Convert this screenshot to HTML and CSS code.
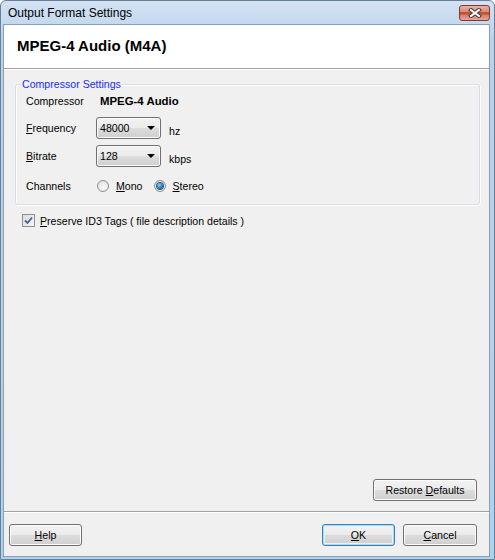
FILE: index.html
```
<!DOCTYPE html>
<html lang="en">
<head>
    <title>Output Format Settings</title>
    <link rel="stylesheet" href="styles.css">
</head>
<body>

    <div class="window">
        <div class="titlebar">
            <span class="title">Output Format Settings</span>
            <div class="close-btn">
                <svg width="14" height="10" viewBox="0 0 14 10">
                    <path d="M3 2 L11 8 M11 2 L3 8" stroke="#3b3b3b" stroke-width="4" stroke-linecap="square"/>
                    <path d="M3 2 L11 8 M11 2 L3 8" stroke="#ffffff" stroke-width="2" stroke-linecap="square"/>
                </svg>
            </div>
        </div>

        <div class="client">
            <div class="header">MPEG-4 Audio (M4A)</div>

            <div class="content">
                <fieldset class="group">
                    <legend>Compressor Settings</legend>

                    <div class="row row-first">
                        <span class="label">Compressor</span>
                        <span class="value">MPEG-4 Audio</span>
                    </div>
                    <div class="row row-combo">
                        <span class="label"><u>F</u>requency</span>
                        <div class="combo"><span>48000</span><span class="arrow"></span></div>
                        <span class="unit">hz</span>
                    </div>
                    <div class="row row-combo">
                        <span class="label"><u>B</u>itrate</span>
                        <div class="combo"><span>128</span><span class="arrow"></span></div>
                        <span class="unit">kbps</span>
                    </div>
                    <div class="row row-channels">
                        <span class="label">Channels</span>
                        <div class="radio"><span class="radio-circle"></span><span><u>M</u>ono</span></div>
                        <div class="radio"><span class="radio-circle checked"></span><span><u>S</u>tereo</span></div>
                    </div>
                </fieldset>

                <div class="check-row">
                    <span class="checkbox">
                        <svg width="11" height="11" viewBox="0 0 11 11">
                            <path d="M2 5.5 L4.5 8 L9 2.5" fill="none" stroke="#4a5f97" stroke-width="1.8"/>
                        </svg>
                    </span>
                    <span><u>P</u>reserve ID3 Tags ( file description details )</span>
                </div>

                <div class="restore-row">
                    <div class="btn btn-restore"><span>Restore <u>D</u>efaults</span></div>
                </div>
            </div>

            <div class="footer">
                <div class="btn btn-help"><span><u>H</u>elp</span></div>
                <div class="footer-right">
                    <div class="btn btn-ok"><span><u>O</u>K</span></div>
                    <div class="btn btn-cancel"><span><u>C</u>ancel</span></div>
                </div>
            </div>
        </div>
    </div>

</body>
</html>
```

FILE: styles.css
```
body {
    margin: 0;
    padding: 0;
    font-family: "Liberation Sans", Arial, sans-serif;
    font-size: 10.6px;
    color: #000;
    background-color: #fff;
}
.window {
    width: 495px;
    height: 560px;
    box-sizing: border-box;
    border: 1px solid #6b7f96;
    border-radius: 6px 6px 0 0;
    padding: 0 4px 2px 2px;
    background: linear-gradient(#d3e2f3, #bad2ea 40px, #b4d0ec 80%, #a9d3f0);
    display: flex;
    flex-direction: column;
}
.titlebar {
    height: 23px;
    display: flex;
    justify-content: space-between;
    align-items: flex-start;
}
.title {
    padding-left: 5px;
    line-height: 24px;
    font-size: 12px;
}
.close-btn {
    margin-top: 4px;
    width: 31px;
    height: 16px;
    box-sizing: border-box;
    border: 1px solid #7e3a33;
    border-radius: 3px;
    background: linear-gradient(#eab0a4, #dc8a7c 40%, #c5532f 42%, #c5532f 60%, #d77a6a 62%, #e7a597);
    display: flex;
    justify-content: center;
    align-items: center;
}
.client {
    flex: 1;
    display: flex;
    flex-direction: column;
    background-color: #f0f0f0;
    border: 1px solid #8c9db2;
}
.header {
    background-color: #fff;
    border-bottom: 1px solid #a0a0a0;
    box-shadow: 0 1px 0 #fff;
    display: flex;
    align-items: center;
    padding: 0 0 2px 13px;
    height: 41px;
    font-size: 15px;
    font-weight: bold;
}
.content {
    flex: 1;
    display: flex;
    flex-direction: column;
    padding: 9px 12px 10px 0;
}
.group {
    margin: 0 -3px 0 11px;
    padding: 0 0 8px 0;
    border: 1px solid #d5dfe5;
    border-radius: 3px;
    box-shadow: inset 1px 1px 0 #fff, 1px 1px 0 #fff;
}
.group legend {
    margin-left: 5px;
    padding: 0 1px;
    line-height: 13px;
    color: #1a2ef0;
    background-color: #f0f0f0;
}
.row {
    display: flex;
    align-items: center;
    padding-left: 10px;
}
.row-first {
    height: 20px;
}
.row-combo {
    height: 22px;
    margin-top: 6px;
}
.row-channels {
    height: 20px;
    margin-top: 9px;
}
.label {
    width: 70px;
}
.value {
    padding-left: 4px;
    font-size: 11.4px;
    font-weight: bold;
}
.combo {
    width: 65px;
    height: 22px;
    box-sizing: border-box;
    border: 1px solid #707070;
    border-radius: 3px;
    background: linear-gradient(#f2f2f2, #ebebeb 50%, #dddddd 50%, #cfcfcf);
    box-shadow: inset 0 0 0 1px #fafafa;
    padding-left: 3px;
    line-height: 20px;
    display: flex;
    justify-content: space-between;
    align-items: center;
}
.arrow {
    width: 0;
    height: 0;
    margin-right: 5px;
    border-left: 4px solid transparent;
    border-right: 4px solid transparent;
    border-top: 4px solid #000;
}
.unit {
    margin-left: 8px;
    padding-top: 6px;
}
.radio {
    display: flex;
    align-items: center;
    margin-left: 1px;
    margin-right: 10px;
}
.radio-circle {
    width: 12px;
    height: 12px;
    box-sizing: border-box;
    border: 1px solid #8e8f8f;
    border-radius: 50%;
    background: radial-gradient(circle at 60% 65%, #f8f8f8, #dcdcdc);
    margin-right: 7px;
    display: flex;
    justify-content: center;
    align-items: center;
}
.radio-circle.checked::after {
    content: "";
    width: 6px;
    height: 6px;
    border-radius: 50%;
    background: radial-gradient(circle at 40% 35%, #8ad1f9, #185b9c 70%);
    box-shadow: 0 0 0 1px #2d5d8a;
}
.check-row {
    display: flex;
    align-items: center;
    margin-top: 9px;
    margin-left: 18px;
    height: 13px;
}
.checkbox {
    width: 13px;
    height: 13px;
    box-sizing: border-box;
    border: 1px solid #8e8f8f;
    background: linear-gradient(135deg, #dcdcdc, #f6f6f6);
    margin-right: 5px;
    display: flex;
    justify-content: center;
    align-items: center;
}
.restore-row {
    flex: 1;
    display: flex;
    justify-content: flex-end;
    align-items: flex-end;
}
.btn {
    height: 22px;
    box-sizing: border-box;
    border: 1px solid #707070;
    border-radius: 3px;
    background: linear-gradient(#f2f2f2, #ebebeb 50%, #dddddd 50%, #cfcfcf);
    box-shadow: inset 0 0 0 1px #fcfcfc;
    display: flex;
    justify-content: center;
    align-items: center;
    cursor: default;
}
.btn-restore {
    width: 104px;
}
.btn-help {
    width: 73px;
}
.btn-ok {
    width: 73px;
    border-color: #3c7fb1;
    box-shadow: inset 0 0 0 1px #a9dcf8, inset 0 0 0 2px #e4f3fb;
}
.btn-cancel {
    width: 74px;
}
.footer {
    display: flex;
    justify-content: space-between;
    padding: 12px 12px 10px 5px;
    border-top: 1px solid #a0a0a0;
    box-shadow: inset 0 1px 0 #fff;
}
.footer-right {
    display: flex;
    gap: 8px;
}
```
